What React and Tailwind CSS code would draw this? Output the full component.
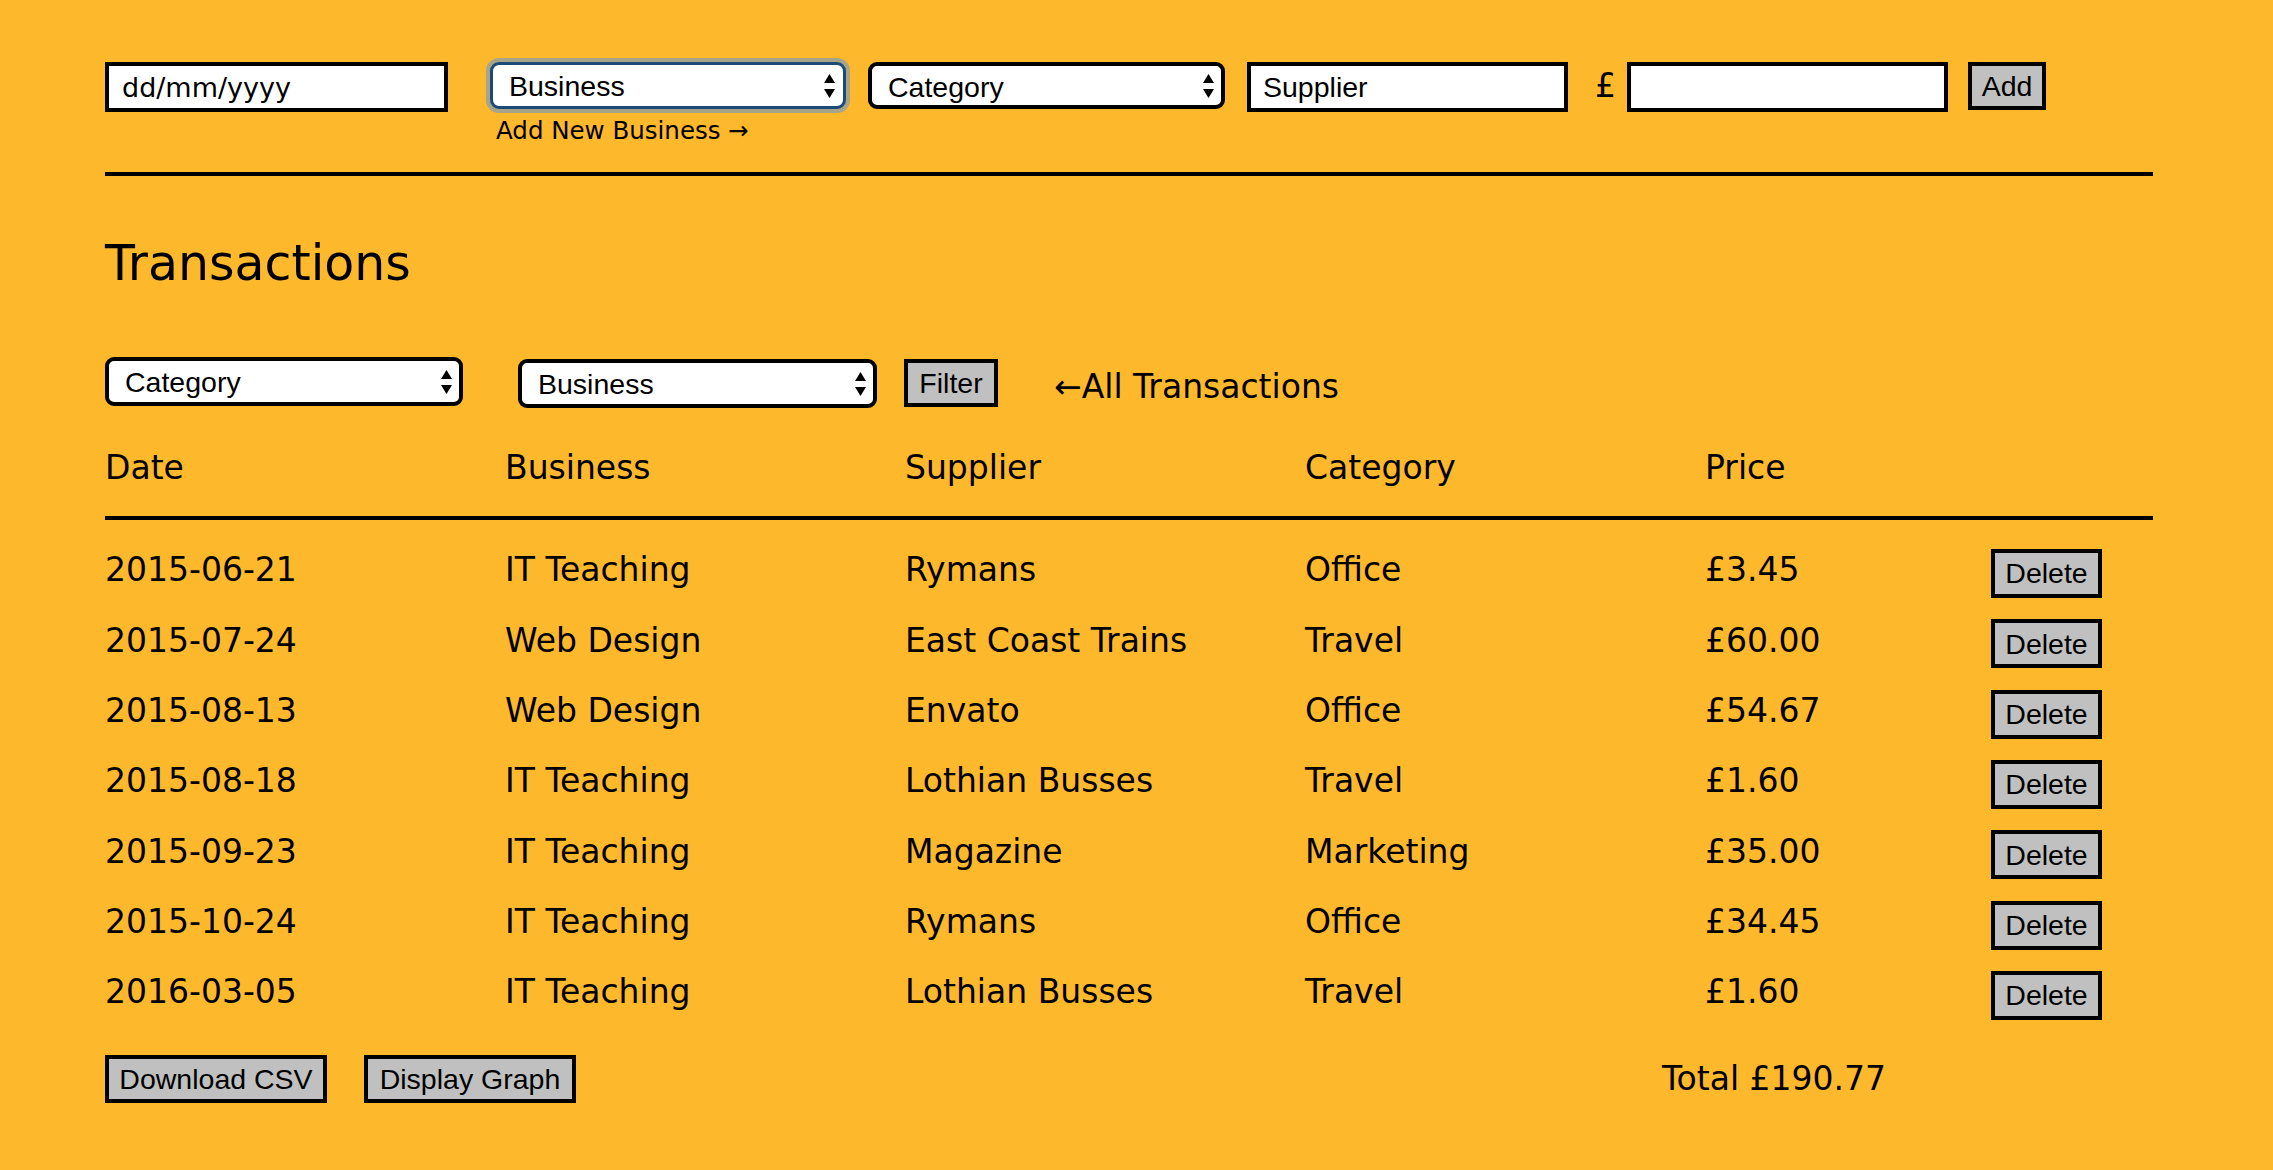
import { useState } from 'react'

const rows = [
  { date: '2015-06-21', business: 'IT Teaching', supplier: 'Rymans', category: 'Office', price: '£3.45' },
  { date: '2015-07-24', business: 'Web Design', supplier: 'East Coast Trains', category: 'Travel', price: '£60.00' },
  { date: '2015-08-13', business: 'Web Design', supplier: 'Envato', category: 'Office', price: '£54.67' },
  { date: '2015-08-18', business: 'IT Teaching', supplier: 'Lothian Busses', category: 'Travel', price: '£1.60' },
  { date: '2015-09-23', business: 'IT Teaching', supplier: 'Magazine', category: 'Marketing', price: '£35.00' },
  { date: '2015-10-24', business: 'IT Teaching', supplier: 'Rymans', category: 'Office', price: '£34.45' },
  { date: '2016-03-05', business: 'IT Teaching', supplier: 'Lothian Busses', category: 'Travel', price: '£1.60' },
]

const control = "font-['Liberation_Sans',Arial,sans-serif] text-black"
const btn = `${control} h-[48px] border-4 border-black bg-[#c0c0c0] text-[28.5px] leading-none`
const cols = 'grid grid-cols-[400px_400px_400px_400px_286px_1fr] items-center'

function Arrows() {
  return (
    <svg className="pointer-events-none absolute right-[10px] top-1/2 -translate-y-1/2" width="13" height="26" viewBox="0 0 13 26">
      <path d="M6.5 1 L12 10 L1 10 Z" fill="#000" />
      <path d="M6.5 25 L12 16 L1 16 Z" fill="#000" />
    </svg>
  )
}

function Select({ label, focused, className = '' }) {
  const ring = focused
    ? 'border-[3px] border-[#1c4a78] shadow-[0_0_0_4px_rgba(110,150,200,0.6)]'
    : 'border-4 border-black'
  return (
    <div className={`relative ${className}`}>
      <select
        defaultValue={label}
        className={`${control} ${ring} m-0 block h-full w-full appearance-none rounded-[9px] bg-white pl-[16px] text-[28.5px] outline-none`}
      >
        <option>{label}</option>
      </select>
      <Arrows />
    </div>
  )
}

export default function App() {
  const [items, setItems] = useState(rows)
  const total = items.reduce((s, r) => s + parseFloat(r.price.slice(1)), 0)

  return (
    <div className="min-h-screen bg-[#fdb82c] font-['DejaVu_Sans',Verdana,sans-serif] text-[33px] text-black">
      <div className="ml-[105px] w-[2048px] pt-[62px]">
        <div className="flex items-start">
          <input
            defaultValue="dd/mm/yyyy"
            className="h-[50px] w-[343px] border-4 border-black bg-white px-[13px] font-['DejaVu_Sans',Verdana,sans-serif] text-[27px] text-black outline-none"
          />
          <div className="ml-[42px] flex flex-col">
            <Select label="Business" focused className="h-[47px] w-[356px]" />
            <span className="ml-[6px] mt-[7px] text-[24.5px] leading-[30px]">Add New Business →</span>
          </div>
          <Select label="Category" className="ml-[22px] h-[47px] w-[357px]" />
          <input
            placeholder="Supplier"
            className={`${control} ml-[22px] h-[50px] w-[321px] border-4 border-black bg-white px-[12px] text-[28.5px] outline-none placeholder:text-black`}
          />
          <span className="ml-[27px] mt-[4px] leading-[40px]">£</span>
          <input className={`${control} ml-[11px] h-[50px] w-[321px] border-4 border-black bg-white px-[12px] text-[28px] outline-none`} />
          <button className={`${btn} ml-[20px] w-[78px]`}>Add</button>
        </div>

        <div className="mt-[26px] h-[4px] bg-black" />

        <h2 className="mt-[59px] text-[49px] leading-[57px]">Transactions</h2>

        <div className="mt-[67px] flex items-start">
          <Select label="Category" className="-mt-[2px] h-[49px] w-[358px]" />
          <Select label="Business" className="ml-[55px] h-[49px] w-[359px]" />
          <button className={`${btn} ml-[27px] w-[94px]`}>Filter</button>
          <span className="ml-[56px] mt-[8px] leading-[40px]">←All Transactions</span>
        </div>

        <div className={`${cols} mt-[25px] h-[70px]`}>
          <div>Date</div>
          <div>Business</div>
          <div>Supplier</div>
          <div>Category</div>
          <div>Price</div>
          <div />
        </div>
        <div className="mt-[13px] h-[4px] bg-black" />

        <div className="mt-[15px]">
          {items.map((r, i) => (
            <div key={i} className={`${cols} h-[70.3px]`}>
              <div>{r.date}</div>
              <div>{r.business}</div>
              <div>{r.supplier}</div>
              <div>{r.category}</div>
              <div>{r.price}</div>
              <div>
                <button
                  className={`${btn} mt-[7px] h-[49px] w-[111px]`}
                  onClick={() => setItems((x) => x.filter((_, j) => j !== i))}
                >
                  Delete
                </button>
              </div>
            </div>
          ))}
        </div>

        <div className="mt-[27px] flex items-center pb-[60px]">
          <button className={`${btn} w-[222px]`}>Download CSV</button>
          <button className={`${btn} ml-[37px] w-[212px]`}>Display Graph</button>
          <span className="ml-[1086px]">Total £{total.toFixed(2)}</span>
        </div>
      </div>
    </div>
  )
}
